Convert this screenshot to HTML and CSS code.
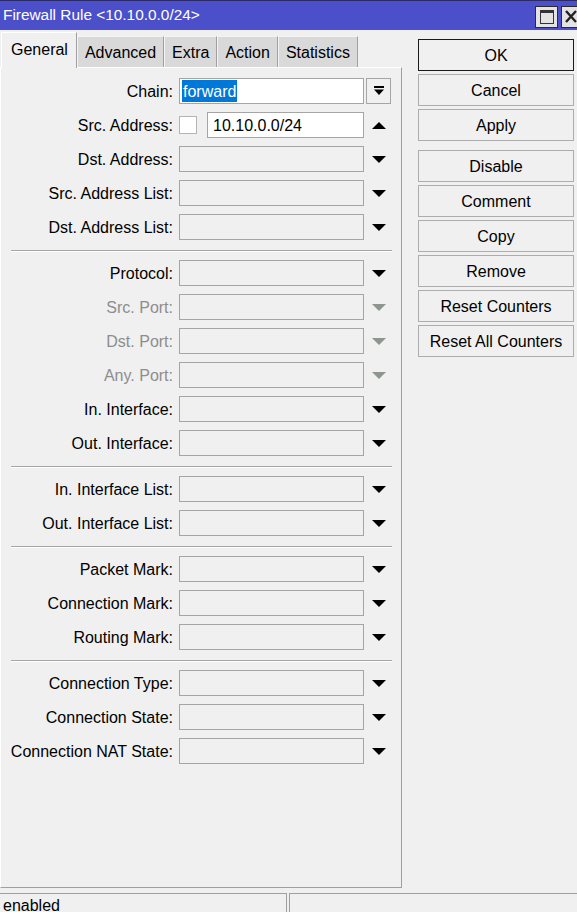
FILE: index.html
```html
<!DOCTYPE html>
<html>
<head>
<meta charset="utf-8">
<link rel="stylesheet" href="styles.css">
</head>
<body>
<div class="window">
  <div class="titlebar">
    <span class="title">Firewall Rule &lt;10.10.0.0/24&gt;</span>
    <div class="tbtns">
      <div class="tbtn"><svg width="21" height="20" viewBox="0 0 21 20"><rect x="4.5" y="3.5" width="13" height="13" fill="none" stroke="#333" stroke-width="1"/><rect x="4" y="3" width="14" height="3" fill="#333"/></svg></div>
      <div class="tbtn close"><svg width="21" height="20" viewBox="0 0 21 20"><path d="M4 4 L14 15 M14 4 L4 15" stroke="#222" stroke-width="2.4" fill="none"/></svg></div>
    </div>
  </div>
  <div class="main">
    <div class="left">
      <div class="tabs">
        <div class="tab active">General</div>
        <div class="tab">Advanced</div>
        <div class="tab">Extra</div>
        <div class="tab">Action</div>
        <div class="tab">Statistics</div>
      </div>
      <div class="panel">
        <div class="group">
          <div class="row">
            <label class="lbl">Chain:</label>
            <div class="field white chain"><span class="sel">forward</span></div>
            <div class="arrow dbtn"><svg width="12" height="12" viewBox="0 0 12 12"><rect x="1" y="1" width="10" height="2" fill="#000"/><path d="M1 4.5 H11 L6 10 Z" fill="#000"/></svg></div>
          </div>
          <div class="row">
            <label class="lbl">Src. Address:</label>
            <div class="check"></div>
            <div class="field white addr">10.10.0.0/24</div>
            <div class="arrow"><span class="tri up"></span></div>
          </div>
          <div class="row">
            <label class="lbl">Dst. Address:</label>
            <div class="field"></div>
            <div class="arrow"><span class="tri"></span></div>
          </div>
          <div class="row">
            <label class="lbl">Src. Address List:</label>
            <div class="field"></div>
            <div class="arrow"><span class="tri"></span></div>
          </div>
          <div class="row">
            <label class="lbl">Dst. Address List:</label>
            <div class="field"></div>
            <div class="arrow"><span class="tri"></span></div>
          </div>
        </div>
        <div class="sep"></div>
        <div class="group">
          <div class="row">
            <label class="lbl">Protocol:</label>
            <div class="field"></div>
            <div class="arrow"><span class="tri"></span></div>
          </div>
          <div class="row">
            <label class="lbl dis">Src. Port:</label>
            <div class="field"></div>
            <div class="arrow"><span class="tri dis"></span></div>
          </div>
          <div class="row">
            <label class="lbl dis">Dst. Port:</label>
            <div class="field"></div>
            <div class="arrow"><span class="tri dis"></span></div>
          </div>
          <div class="row">
            <label class="lbl dis">Any. Port:</label>
            <div class="field"></div>
            <div class="arrow"><span class="tri dis"></span></div>
          </div>
          <div class="row">
            <label class="lbl">In. Interface:</label>
            <div class="field"></div>
            <div class="arrow"><span class="tri"></span></div>
          </div>
          <div class="row">
            <label class="lbl">Out. Interface:</label>
            <div class="field"></div>
            <div class="arrow"><span class="tri"></span></div>
          </div>
        </div>
        <div class="sep"></div>
        <div class="group">
          <div class="row">
            <label class="lbl">In. Interface List:</label>
            <div class="field"></div>
            <div class="arrow"><span class="tri"></span></div>
          </div>
          <div class="row">
            <label class="lbl">Out. Interface List:</label>
            <div class="field"></div>
            <div class="arrow"><span class="tri"></span></div>
          </div>
        </div>
        <div class="sep"></div>
        <div class="group">
          <div class="row">
            <label class="lbl">Packet Mark:</label>
            <div class="field"></div>
            <div class="arrow"><span class="tri"></span></div>
          </div>
          <div class="row">
            <label class="lbl">Connection Mark:</label>
            <div class="field"></div>
            <div class="arrow"><span class="tri"></span></div>
          </div>
          <div class="row">
            <label class="lbl">Routing Mark:</label>
            <div class="field"></div>
            <div class="arrow"><span class="tri"></span></div>
          </div>
        </div>
        <div class="sep"></div>
        <div class="group">
          <div class="row">
            <label class="lbl">Connection Type:</label>
            <div class="field"></div>
            <div class="arrow"><span class="tri"></span></div>
          </div>
          <div class="row">
            <label class="lbl">Connection State:</label>
            <div class="field"></div>
            <div class="arrow"><span class="tri"></span></div>
          </div>
          <div class="row">
            <label class="lbl">Connection NAT State:</label>
            <div class="field"></div>
            <div class="arrow"><span class="tri"></span></div>
          </div>
        </div>
      </div>
    </div>
    <div class="right">
      <div class="btn default">OK</div>
      <div class="btn">Cancel</div>
      <div class="btn">Apply</div>
      <div class="btn gap">Disable</div>
      <div class="btn">Comment</div>
      <div class="btn">Copy</div>
      <div class="btn">Remove</div>
      <div class="btn">Reset Counters</div>
      <div class="btn">Reset All Counters</div>
    </div>
  </div>
  <div class="status">
    <div class="scell first">enabled</div>
    <div class="scell second"></div>
  </div>
</div>
</body>
</html>
```
FILE: styles.css
```css
html, body {
  margin: 0;
  padding: 0;
  background: #f0f0f0;
  overflow: hidden;
}
.window {
  width: 577px;
  height: 912px;
  font-family: "Liberation Sans", Arial, sans-serif;
  font-size: 16px;
  color: #000;
  overflow: hidden;
}
.titlebar {
  height: 30px;
  box-sizing: border-box;
  border-top: 1px solid #2a2a6a;
  background: #4b4fca;
  display: flex;
  align-items: center;
  justify-content: space-between;
  overflow: hidden;
}
.title {
  color: #fff;
  font-size: 15.4px;
  padding-left: 3px;
  padding-bottom: 1px;
}
.tbtns {
  display: flex;
  gap: 3px;
  margin-right: -7px;
  padding-top: 3px;
}
.tbtn {
  width: 23px;
  height: 22px;
  box-sizing: border-box;
  border: 1px solid #2b2b2b;
  background: #e3e3e3;
  display: flex;
  align-items: center;
  justify-content: center;
}
.main {
  display: flex;
}
.left {
  width: 402px;
}
.tabs {
  height: 37px;
  display: flex;
  align-items: flex-end;
  padding-left: 1px;
}
.tab {
  height: 31px;
  box-sizing: border-box;
  padding: 2px 7px 0 7px;
  background: #d9d9d9;
  border-top: 1px solid #f4f4f4;
  border-left: 1px solid #f4f4f4;
  border-right: 1px solid #a0a0a0;
  display: flex;
  align-items: center;
}
.tab.active {
  height: 36px;
  padding: 0 8px 1px 9px;
  background: #f0f0f0;
  border-top: 1px solid #ffffff;
  border-left: 1px solid #ffffff;
  border-right: 1px solid #a0a0a0;
  position: relative;
  z-index: 1;
  margin-bottom: -1px;
}
.panel {
  height: 821px;
  box-sizing: border-box;
  border-top: 1px solid #ffffff;
  border-left: 1px solid #ffffff;
  border-right: 1px solid #a0a0a0;
  border-bottom: 1px solid #a0a0a0;
  padding: 10px 0 0 9px;
}
.group {
  display: flex;
  flex-direction: column;
  gap: 8px;
}
.row {
  display: flex;
  align-items: center;
  height: 26px;
}
.lbl {
  width: 163px;
  margin-right: 6px;
  text-align: right;
  white-space: nowrap;
  padding-top: 2px;
}
.lbl.dis {
  color: #8d8d8d;
}
.field {
  width: 185px;
  height: 26px;
  box-sizing: border-box;
  border: 1px solid #a5a5a5;
  background: #f0f0f0;
  display: flex;
  align-items: center;
}
.field.white {
  background: #ffffff;
}
.chain {
  padding-left: 2px;
}
.sel {
  background: #0078d7;
  color: #fff;
  line-height: 22px;
  display: inline-block;
  padding: 1px 1px 0 1px;
  height: 22px;
  box-sizing: border-box;
}
.check {
  width: 18px;
  height: 18px;
  box-sizing: border-box;
  border: 1px solid #b4b4b4;
  background: #fff;
  margin-right: 10px;
}
.addr {
  width: 157px;
  padding-left: 5px;
  padding-top: 2px;
}
.arrow {
  width: 25px;
  height: 26px;
  margin-left: 2px;
  display: flex;
  align-items: center;
  justify-content: center;
  box-sizing: border-box;
}
.arrow.dbtn {
  border: 1px solid #a5a5a5;
  background: #f0f0f0;
}
.tri {
  width: 0;
  height: 0;
  border-left: 7px solid transparent;
  border-right: 7px solid transparent;
  border-top: 7px solid #000;
  margin-top: 1px;
}
.tri.up {
  border-top: 0;
  border-bottom: 7px solid #000;
  margin-top: 0;
}
.tri.dis {
  border-top-color: #8e958e;
}
.sep {
  width: 381px;
  height: 1px;
  background: #a5a5a5;
  border-bottom: 1px solid #ffffff;
  margin: 10px 0 8px 1px;
}
.right {
  margin-left: 16px;
  padding-top: 9px;
  display: flex;
  flex-direction: column;
  gap: 3px;
}
.btn {
  width: 156px;
  height: 32px;
  box-sizing: border-box;
  border: 1px solid #adadad;
  background: #f0f0f0;
  display: flex;
  align-items: center;
  justify-content: center;
  white-space: nowrap;
  padding-top: 2px;
}
.btn.default {
  border: 1px solid #1a1a1a;
}
.btn.gap {
  margin-top: 6px;
}
.status {
  margin-top: 5px;
  display: flex;
  height: 24px;
}
.scell {
  box-sizing: border-box;
  border-top: 1px solid #a0a0a0;
  height: 24px;
  padding: 2px 0 0 3px;
  line-height: 20px;
}
.scell.first {
  width: 287px;
  border-right: 1px solid #a0a0a0;
}
.scell.second {
  flex: 1;
  margin-left: 2px;
  border-left: 1px solid #a0a0a0;
}
```
